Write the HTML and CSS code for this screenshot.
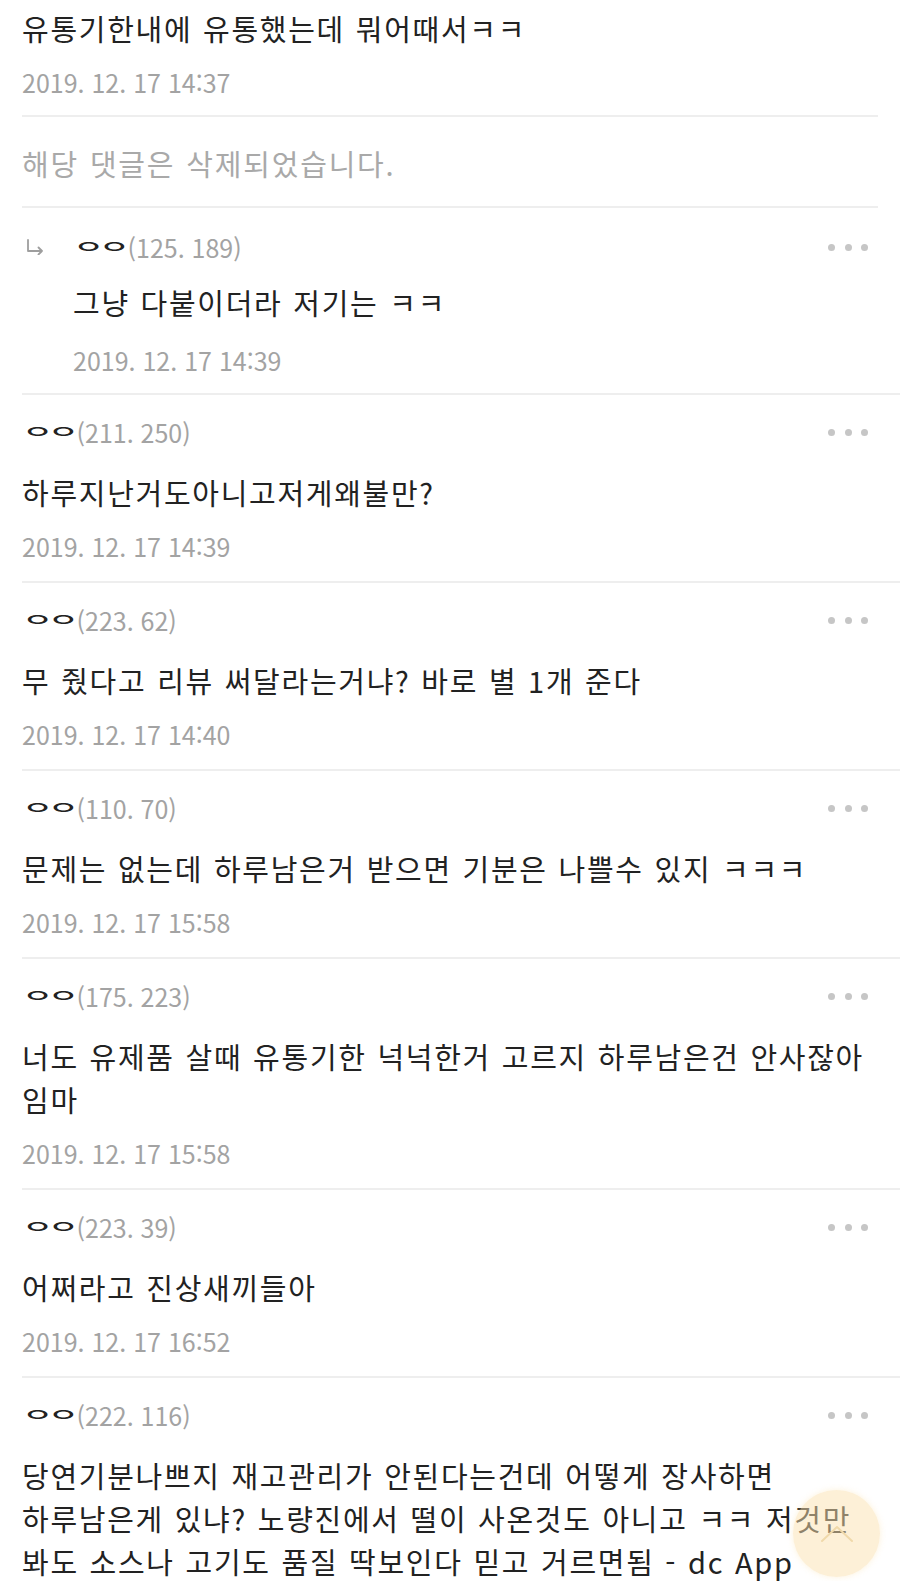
FILE: index.html
```html
<!DOCTYPE html>
<html lang="ko">
<head>
<meta charset="utf-8">
<title>댓글</title>
<link rel="stylesheet" href="styles.css">
</head>
<body>
<div class="list">
  <div class="comment first">
    <p class="body">유통기한내에 유통했는데 뭐어때서ㅋㅋ</p>
    <div class="date">2019. 12. 17 14:37</div>
  </div>

  <div class="comment deleted">해당 댓글은 삭제되었습니다.</div>

  <div class="comment reply">
    <div class="reply-mark">
      <svg width="18" height="16" viewBox="0 0 18 16"><path d="M2 1 V12 H16 M12.5 8.5 L16 12 L12.5 15.5" fill="none" stroke="#9e9e9e" stroke-width="1.8" stroke-linejoin="round" stroke-linecap="round"/></svg>
    </div>
    <div class="content">
      <div class="head"><div class="who"><span class="nick">ㅇㅇ</span><span class="ip">(125. 189)</span></div><div class="dots"><i></i><i></i><i></i></div></div>
      <p class="body">그냥 다붙이더라 저기는 ㅋㅋ</p>
      <div class="date">2019. 12. 17 14:39</div>
    </div>
  </div>

  <div class="comment">
    <div class="head"><div class="who"><span class="nick">ㅇㅇ</span><span class="ip">(211. 250)</span></div><div class="dots"><i></i><i></i><i></i></div></div>
    <p class="body">하루지난거도아니고저게왜불만?</p>
    <div class="date">2019. 12. 17 14:39</div>
  </div>

  <div class="comment">
    <div class="head"><div class="who"><span class="nick">ㅇㅇ</span><span class="ip">(223. 62)</span></div><div class="dots"><i></i><i></i><i></i></div></div>
    <p class="body">무 줬다고 리뷰 써달라는거냐? 바로 별 1개 준다</p>
    <div class="date">2019. 12. 17 14:40</div>
  </div>

  <div class="comment">
    <div class="head"><div class="who"><span class="nick">ㅇㅇ</span><span class="ip">(110. 70)</span></div><div class="dots"><i></i><i></i><i></i></div></div>
    <p class="body">문제는 없는데 하루남은거 받으면 기분은 나쁠수 있지 ㅋㅋㅋ</p>
    <div class="date">2019. 12. 17 15:58</div>
  </div>

  <div class="comment">
    <div class="head"><div class="who"><span class="nick">ㅇㅇ</span><span class="ip">(175. 223)</span></div><div class="dots"><i></i><i></i><i></i></div></div>
    <p class="body">너도 유제품 살때 유통기한 넉넉한거 고르지 하루남은건 안사잖아 임마</p>
    <div class="date">2019. 12. 17 15:58</div>
  </div>

  <div class="comment">
    <div class="head"><div class="who"><span class="nick">ㅇㅇ</span><span class="ip">(223. 39)</span></div><div class="dots"><i></i><i></i><i></i></div></div>
    <p class="body">어쩌라고 진상새끼들아</p>
    <div class="date">2019. 12. 17 16:52</div>
  </div>

  <div class="comment">
    <div class="head"><div class="who"><span class="nick">ㅇㅇ</span><span class="ip">(222. 116)</span></div><div class="dots"><i></i><i></i><i></i></div></div>
    <p class="body">당연기분나쁘지 재고관리가 안된다는건데 어떻게 장사하면 하루남은게 있냐? 노량진에서 떨이 사온것도 아니고 ㅋㅋ 저것만 봐도 소스나 고기도 품질 딱보인다 믿고 거르면됨 - dc App</p>
  </div>
</div>

<button class="top-btn" type="button" aria-label="맨 위로">
  <svg width="34" height="18" viewBox="0 0 34 18"><path d="M2 16 L17 2 L32 16" fill="none" stroke="#f0d9aa" stroke-width="2" stroke-linecap="round" stroke-linejoin="round"/></svg>
</button>
</body>
</html>
```

FILE: styles.css
```css
html {
  overflow: hidden;
}

body {
  margin: 0;
  background: #ffffff;
  font-family: "Noto Sans CJK KR", "Noto Sans", sans-serif;
  color: #222222;
}

.list {
  padding-left: 22px;
}

.comment {
  border-top: 2px solid #eeeeee;
  padding: 19px 14px 18px 0;
}

.comment.first {
  border-top: none;
  padding-top: 7px;
  padding-bottom: 16px;
}

.comment.deleted {
  padding-top: 29px;
  padding-bottom: 26px;
  margin-right: 22px;
  padding-right: 0;
  border-bottom: 2px solid #eeeeee;
  font-size: 29px;
  line-height: 34px;
  letter-spacing: 1.8px;
  word-spacing: 1px;
  color: #a9a9a9;
}

.comment.reply {
  border-top: none;
  display: flex;
  padding-top: 21px;
  padding-bottom: 16px;
}

.reply-mark {
  width: 51px;
  flex: none;
  padding-top: 7px;
  padding-left: 4px;
  box-sizing: border-box;
}

.content {
  flex: 1;
  min-width: 0;
}

.reply .body {
  margin-top: 16px;
}

.reply .date {
  margin-top: 19px;
}

.head {
  display: flex;
  align-items: center;
  justify-content: space-between;
  height: 36px;
}

.who {
  display: flex;
  align-items: center;
  line-height: 36px;
}

.nick {
  display: block;
  height: 36px;
  margin-left: 0;
  margin-top: -3px;
  color: #222222;
  font-size: 34px;
  font-weight: 500;
  line-height: 36px;
  letter-spacing: -5.5px;
  transform: scaleY(0.5);
}

.ip {
  margin-left: 3px;
  font-size: 25px;
  color: #a3a3a3;
}

.dots {
  display: flex;
  gap: 9.5px;
  margin-right: 18px;
}

.dots i {
  display: block;
  width: 7px;
  height: 7px;
  border-radius: 50%;
  background: #c6c6c6;
}

.body {
  margin: 21px 0 0;
  font-size: 29px;
  line-height: 43px;
  letter-spacing: 1.7px;
  word-spacing: 1px;
  word-break: keep-all;
}

.comment.first .body {
  margin-top: 0;
}

.date {
  margin-top: 15px;
  font-size: 25px;
  line-height: 34px;
  color: #a3a3a3;
}

.top-btn {
  position: fixed;
  right: 20px;
  bottom: 4px;
  width: 87px;
  height: 87px;
  border: none;
  border-radius: 50%;
  padding: 0;
  background: rgba(251, 226, 176, 0.5);
  box-shadow: 0 0 6px rgba(251, 226, 176, 0.45);
  display: flex;
  align-items: center;
  justify-content: center;
}
```
